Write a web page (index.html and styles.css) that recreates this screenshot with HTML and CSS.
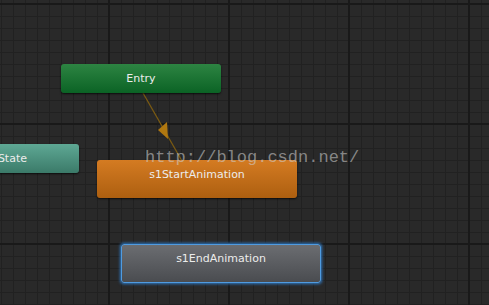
FILE: index.html
```html
<!DOCTYPE html>
<html lang="en">
<head>
    <meta charset="UTF-8">
    <title>Animator</title>
    <link rel="stylesheet" href="styles.css">
</head>
<body>
    <div class="graph">
        <svg class="links" width="489" height="305" viewBox="0 0 489 305">
            <line x1="143" y1="93" x2="182" y2="161" stroke="#7a5a12" stroke-width="1.3"/>
            <polygon points="158,130 167,122 168,139" fill="#b07810"/>
        </svg>

        <div class="node node-entry">Entry</div>
        <div class="node node-any">State</div>
        <div class="node node-start">s1StartAnimation</div>
        <div class="node node-end">s1EndAnimation</div>

        <div class="watermark">http://blog.csdn.net/</div>
    </div>
</body>
</html>
```

FILE: styles.css
```css
* {
    margin: 0;
    padding: 0;
    box-sizing: border-box;
}

body {
    background: #282828;
    font-family: 'DejaVu Sans', sans-serif;
}

/* canvas do animator com grade */
.graph {
    position: relative;
    width: 489px;
    height: 305px;
    overflow: hidden;
    background-color: #292929;
    background-image:
        linear-gradient(to right, #191919 0 2px, transparent 2px),
        linear-gradient(to bottom, #191919 0 2px, transparent 2px),
        linear-gradient(to right, #212121 0 1px, transparent 1px),
        linear-gradient(to bottom, #212121 0 1px, transparent 1px);
    background-size: 120px 120px, 120px 120px, 12px 12px, 12px 12px;
    background-position: 108px 0, 0 3px, 1px 0, 0 4px;
}

.links {
    position: absolute;
    left: 0;
    top: 0;
}

.node {
    position: absolute;
    height: 29px;
    border-radius: 3px;
    color: #ececec;
    font-size: 11px;
    text-align: center;
    line-height: 29px;
    box-shadow: 0 1px 2px rgba(0, 0, 0, 0.7);
}

.node-entry {
    left: 61px;
    top: 64px;
    width: 160px;
    background: linear-gradient(#2d8442, #0b6325);
}

.node-any {
    left: -81px;
    top: 144px;
    width: 160px;
    text-align: right;
    padding-right: 52px;
    background: linear-gradient(#5ea894, #3b7a69);
}

.node-start {
    left: 97px;
    top: 160px;
    width: 200px;
    height: 38px;
    line-height: 29px;
    background: linear-gradient(#d47b22, #ad5f10);
}

.node-end {
    left: 121px;
    top: 244px;
    width: 200px;
    height: 39px;
    line-height: 28px;
    border: 1px solid #4f9be0;
    box-shadow: 0 0 3px 1px #2f78c0;
    background: linear-gradient(#6b6d71, #4a4c50);
}

.watermark {
    position: absolute;
    left: 145px;
    top: 148px;
    font-family: 'Liberation Mono', monospace;
    font-size: 17px;
    color: rgba(205, 205, 205, 0.58);
}
```
